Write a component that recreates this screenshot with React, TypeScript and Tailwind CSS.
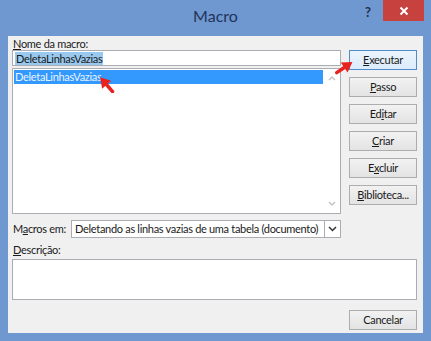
import React from "react";

const font = { fontFamily: 'Lato, "Noto Sans", Arial, sans-serif' };

function Btn({ label, u, def = false }: { label: string; u: number; def?: boolean }) {
  return (
    <div
      className={
        "w-[68px] h-[20px] flex items-center justify-center border whitespace-nowrap " +
        (def
          ? "border-[#4e8ccc] bg-gradient-to-b from-[#eaf4fc] to-[#dcecfc]"
          : "border-[#adadad] bg-gradient-to-b from-[#f2f2f2] to-[#e3e3e3]")
      }
    >
      <span>
        {label.slice(0, u)}
        <span className="underline">{label[u]}</span>
        {label.slice(u + 1)}
      </span>
    </div>
  );
}

function RedArrow({ className, rotate }: { className: string; rotate: number }) {
  return (
    <svg className={className} width="24" height="18" viewBox="0 0 24 18">
      <g transform={`rotate(${rotate} 12 9)`}>
        <path d="M2 9 L13 9" stroke="#e8231f" strokeWidth="3.5" strokeLinecap="round" />
        <path d="M11 3 L21 9 L11 15 Z" fill="#e8231f" />
      </g>
    </svg>
  );
}

export default function App() {
  return (
    <div className="w-[431px] h-[341px] bg-[#6f97d0] flex flex-col relative overflow-hidden" style={font}>
      {/* title bar */}
      <div className="h-[36px] relative flex items-start justify-center">
        <span className="mt-[4px] text-[16px] text-[#22345a]">Macro</span>
        <span className="absolute left-[365px] top-[3px] text-[13px] font-bold text-[#1f2f4f]">?</span>
        <div className="absolute left-[383px] top-0 w-[41px] h-[21px] bg-[#c7413f] flex items-center justify-center">
          <svg width="10" height="10" viewBox="0 0 10 10">
            <path d="M1.5 1.5 L8.5 8.5 M8.5 1.5 L1.5 8.5" stroke="#fff" strokeWidth="2" />
          </svg>
        </div>
      </div>
      {/* client */}
      <div className="mx-[8px] h-[297px] bg-[#f0f0f0] flex flex-col px-[4px] pr-[6px] text-[11px] tracking-[-0.3px] text-[#1a1a1a]">
        <div className="flex gap-[8px]">
          <div className="w-[329px] flex flex-col">
            <div className="h-[13px] leading-[13px] pl-[1px] mt-[1px] whitespace-nowrap">
              <span className="underline">N</span>ome da macro:
            </div>
            <div className="mt-[0px] h-[16px] border border-[#abadb3] bg-white flex items-center px-[2px]">
              <span className="bg-[#99c9ef] leading-[13px] px-[1px]">DeletaLinhasVazias</span>
            </div>
            <div className="mt-[2px] h-[146px] border border-[#abadb3] bg-white flex">
              <div className="flex-1 pt-[1px] pl-[1px]">
                <div className="h-[14px] bg-[#3399ff] text-[#eaf3ff] leading-[14px] pl-[1px]">DeletaLinhasVazias</div>
              </div>
              <div className="w-[17px] flex flex-col justify-between items-center py-[6px]">
                <svg width="8" height="6" viewBox="0 0 8 6"><path d="M1 5 L4 2 L7 5" stroke="#c4c4c4" strokeWidth="1.5" fill="none" /></svg>
                <svg width="8" height="6" viewBox="0 0 8 6"><path d="M1 1 L4 4 L7 1" stroke="#c4c4c4" strokeWidth="1.5" fill="none" /></svg>
              </div>
            </div>
            <div className="mt-[6px] flex items-center h-[18px]">
              <div className="w-[59px] pl-[1px] whitespace-nowrap">
                M<span className="underline">a</span>cros em:
              </div>
              <div className="flex-1 h-[18px] border border-[#abadb3] bg-white flex items-center">
                <span className="flex-1 pl-[3px] leading-[14px] whitespace-nowrap overflow-hidden">Deletando as linhas vazias de uma tabela (documento)</span>
                <div className="w-[16px] h-full border-l border-[#abadb3] flex items-center justify-center">
                  <svg width="9" height="6" viewBox="0 0 9 6"><path d="M1 1 L4.5 4.5 L8 1" stroke="#333" strokeWidth="1.5" fill="none" /></svg>
                </div>
              </div>
            </div>
          </div>
          <div className="w-[68px] flex flex-col gap-[7px] pt-[14px]">
            <Btn label="Executar" u={0} def />
            <Btn label="Passo" u={0} />
            <Btn label="Editar" u={2} />
            <Btn label="Criar" u={0} />
            <Btn label="Excluir" u={1} />
            <Btn label="Biblioteca..." u={0} />
          </div>
        </div>
        <div className="mt-[4px] h-[15px] leading-[15px] pl-[1px] whitespace-nowrap">
          <span className="underline">D</span>escrição:
        </div>
        <div className="mt-[2px] h-[41px] border border-[#abadb3] bg-white" />
        <div className="mt-[10px] flex justify-end">
          <div className="w-[68px] h-[20px] flex items-center justify-center border border-[#adadad] bg-gradient-to-b from-[#f2f2f2] to-[#e3e3e3]">
            Cancelar
          </div>
        </div>
      </div>
      <RedArrow className="absolute left-[333px] top-[58px]" rotate={-34} />
      <RedArrow className="absolute left-[94px] top-[75px]" rotate={-131} />
    </div>
  );
}
